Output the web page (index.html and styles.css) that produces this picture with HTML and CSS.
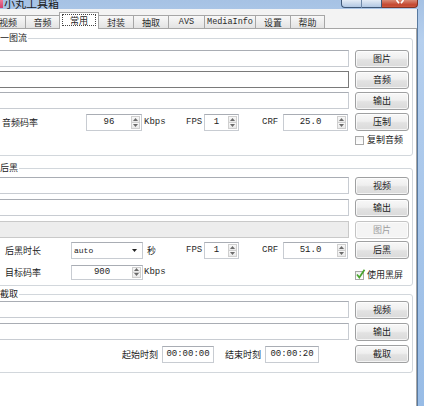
FILE: index.html
```html
<!DOCTYPE html>
<html lang="zh-CN">
<head>
<meta charset="utf-8">
<title>小丸工具箱</title>
<link rel="stylesheet" href="styles.css">
</head>
<body>
<div class="window">
  <div class="titlebar">
    <span class="app-icon"></span>
    <span class="title">小丸工具箱</span>
    <div class="caption">
      <span class="cap-btn cap-min"></span>
      <span class="cap-btn cap-max"></span>
      <span class="cap-btn cap-close"><svg class="cap-x" width="8" height="4" viewBox="0 0 8 4"><path d="M0.5 0 L3 3.2 M7.5 0 L5 3.2" stroke="#fff" stroke-width="1.6" fill="none"/></svg></span>
    </div>
  </div>
  <div class="client">
    <div class="tabs">
      <div class="tab w36">视频</div>
      <div class="tab w35">音频</div>
      <div class="tab w40 active"><span class="focus">常用</span></div>
      <div class="tab w36">封装</div>
      <div class="tab w36">抽取</div>
      <div class="tab w37 latin">AVS</div>
      <div class="tab w52 latin">MediaInfo</div>
      <div class="tab w36">设置</div>
      <div class="tab w35">帮助</div>
    </div>
    <div class="tabpage">
      <fieldset class="group g1">
        <legend>一图流</legend>
        <div class="group-body">
          <div class="row"><div class="tb"></div><button class="btn">图片</button></div>
          <div class="row"><div class="tb focused"></div><button class="btn">音频</button></div>
          <div class="row"><div class="tb"></div><button class="btn">输出</button></div>
          <div class="params p1">
            <span class="lbl lbl-a">音频码率</span>
            <div class="spin"><span class="val">96</span><span class="updown"><span><svg width="5" height="3" viewBox="0 0 5 3"><path d="M0 3 L2.5 0 L5 3Z" fill="#6b6b6b"/></svg></span><span><svg width="5" height="3" viewBox="0 0 5 3"><path d="M0 0 L2.5 3 L5 0Z" fill="#6b6b6b"/></svg></span></span></div>
            <span class="unit u-kbps">Kbps</span>
            <span class="unit">FPS</span>
            <div class="spin"><span class="val">1</span><span class="updown"><span><svg width="5" height="3" viewBox="0 0 5 3"><path d="M0 3 L2.5 0 L5 3Z" fill="#6b6b6b"/></svg></span><span><svg width="5" height="3" viewBox="0 0 5 3"><path d="M0 0 L2.5 3 L5 0Z" fill="#6b6b6b"/></svg></span></span></div>
            <span class="unit u-crf">CRF</span>
            <div class="spin"><span class="val">25.0</span><span class="updown"><span><svg width="5" height="3" viewBox="0 0 5 3"><path d="M0 3 L2.5 0 L5 3Z" fill="#6b6b6b"/></svg></span><span><svg width="5" height="3" viewBox="0 0 5 3"><path d="M0 0 L2.5 3 L5 0Z" fill="#6b6b6b"/></svg></span></span></div>
            <span></span>
            <button class="btn">压制</button>
          </div>
          <div class="checkrow">
            <label class="check"><span class="box"></span>复制音频</label>
          </div>
        </div>
      </fieldset>

      <fieldset class="group g2">
        <legend>后黑</legend>
        <div class="group-body">
          <div class="row"><div class="tb"></div><button class="btn">视频</button></div>
          <div class="row"><div class="tb"></div><button class="btn">输出</button></div>
          <div class="row"><div class="tb disabled"></div><button class="btn" disabled>图片</button></div>
          <div class="params p2">
            <span class="lbl lbl-b">后黑时长</span>
            <div class="combo"><span class="combo-text">auto</span><svg class="combo-arrow" width="5" height="3" viewBox="0 0 5 3"><path d="M0 0 L2.5 3 L5 0Z" fill="#222"/></svg></div>
            <span class="unit u-sec">秒</span>
            <span class="unit">FPS</span>
            <div class="spin"><span class="val">1</span><span class="updown"><span><svg width="5" height="3" viewBox="0 0 5 3"><path d="M0 3 L2.5 0 L5 3Z" fill="#6b6b6b"/></svg></span><span><svg width="5" height="3" viewBox="0 0 5 3"><path d="M0 0 L2.5 3 L5 0Z" fill="#6b6b6b"/></svg></span></span></div>
            <span class="unit u-crf">CRF</span>
            <div class="spin"><span class="val">51.0</span><span class="updown"><span><svg width="5" height="3" viewBox="0 0 5 3"><path d="M0 3 L2.5 0 L5 3Z" fill="#6b6b6b"/></svg></span><span><svg width="5" height="3" viewBox="0 0 5 3"><path d="M0 0 L2.5 3 L5 0Z" fill="#6b6b6b"/></svg></span></span></div>
            <span></span>
            <button class="btn">后黑</button>

            <span class="lbl lbl-b">目标码率</span>
            <div class="spin spin-short"><span class="val">900</span><span class="updown"><span><svg width="5" height="3" viewBox="0 0 5 3"><path d="M0 3 L2.5 0 L5 3Z" fill="#6b6b6b"/></svg></span><span><svg width="5" height="3" viewBox="0 0 5 3"><path d="M0 0 L2.5 3 L5 0Z" fill="#6b6b6b"/></svg></span></span></div>
            <span class="unit u-kbps2">Kbps</span>
            <label class="check check-end"><span class="box"><svg width="11" height="11" viewBox="0 0 11 11"><path d="M2 5.5 L4.3 8.5 L9.5 0.8" stroke="#49a52e" stroke-width="1.7" fill="none"/></svg></span>使用黑屏</label>
          </div>
        </div>
      </fieldset>

      <fieldset class="group g3">
        <legend>截取</legend>
        <div class="group-body">
          <div class="row"><div class="tb"></div><button class="btn">视频</button></div>
          <div class="row"><div class="tb"></div><button class="btn">输出</button></div>
          <div class="times">
            <span class="lbl lbl-r">起始时刻</span>
            <div class="tb time">00:00:00</div>
            <span class="lbl lbl-r">结束时刻</span>
            <div class="tb time">00:00:20</div>
            <span></span>
            <button class="btn">截取</button>
          </div>
        </div>
      </fieldset>
    </div>
  </div>
</div>
</body>
</html>
```

FILE: styles.css
```css
* { box-sizing: border-box; }

html, body {
  margin: 0;
  padding: 0;
}

body {
  width: 424px;
  height: 406px;
  overflow: hidden;
  background: #fff;
  font-family: "Noto Sans CJK SC", "Noto Sans", sans-serif;
  font-size: 9px;
  color: #1c1c1c;
}

.window {
  width: 424px;
  height: 406px;
  display: flex;
  flex-direction: column;
  overflow: hidden;
  background: linear-gradient(to bottom, #a6c2e4 0px, #b5cfee 40px, #98bce6 100%);
}

/* ---------- title bar ---------- */
.titlebar {
  height: 9px;
  flex: none;
  display: flex;
  align-items: flex-start;
  padding-right: 6px;
  overflow: hidden;
}

.app-icon {
  width: 3px;
  height: 8px;
  background: linear-gradient(#f07a98, #cf3f6a);
}

.title {
  font-size: 11px;
  line-height: 12px;
  margin-top: -3px;
  margin-left: 1px;
  color: #1a1a1a;
}

.caption {
  margin-left: auto;
  display: flex;
}

.cap-btn {
  height: 8px;
  border: 1px solid #3f5878;
  border-top: none;
  display: flex;
  justify-content: center;
  align-items: flex-start;
}

.cap-min {
  width: 21px;
  border-bottom-left-radius: 4px;
  border-right-color: #6f88a8;
  background: linear-gradient(#e4ecf6, #c6d6ea 60%, #b2c8e3);
}

.cap-max {
  width: 20px;
  border-left: none;
  background: linear-gradient(#e4ecf6, #c6d6ea 60%, #b2c8e3);
}

.cap-close {
  width: 36px;
  border-color: #7e3326;
  border-left: none;
  border-bottom-right-radius: 4px;
  background: linear-gradient(#d98a76, #c4462f 70%, #cf5a40);
}

.cap-x { display: block; }

/* ---------- client area ---------- */
.client {
  flex: 1;
  min-height: 0;
  margin-right: 7px;
  background: #f3f3f3;
  box-shadow: 1px 0 0 #58799f;
  display: flex;
  flex-direction: column;
}

.tabs {
  height: 19px;
  flex: none;
  display: flex;
  align-items: flex-end;
  margin-left: -10px;
}

.tab {
  height: 13px;
  margin-right: -1px;
  border: 1px solid #a6a6a6;
  border-bottom: none;
  background: linear-gradient(#f8f8f8, #e3e3e3);
  display: flex;
  align-items: center;
  justify-content: center;
  font-size: 9px;
  line-height: 11px;
  color: #2a2a2a;
}

.tab.latin {
  font-family: "Liberation Mono", monospace;
  font-size: 8.5px;
}

.w35 { width: 35px; }
.w36 { width: 36px; }
.w37 { width: 37px; }
.w40 { width: 40px; }
.w52 { width: 52px; }

.tab.active {
  height: 17px;
  margin-bottom: -1px;
  position: relative;
  z-index: 1;
  background: #fff;
  padding: 1px 2px 3px 2px;
  align-items: stretch;
}

.focus {
  flex: 1;
  border: 1px dotted #444;
  display: flex;
  align-items: center;
  justify-content: center;
}

.tabpage {
  flex: 1;
  min-height: 0;
  margin-left: -14px;
  background: #fff;
  border: 1px solid #a6a6a6;
  border-bottom: none;
  padding: 3px 3px 0 3px;
}

/* ---------- group boxes ---------- */
.group {
  margin: 0;
  min-width: 0;
  border: 1px solid #d2d7dc;
  border-radius: 3px;
  padding: 6px 3px 10px 5px;
}

.group legend {
  margin-left: 3px;
  padding: 0 1px;
  font-size: 9px;
  line-height: 12px;
  color: #1c1c1c;
}

.group-body {
  display: flex;
  flex-direction: column;
  gap: 4px;
}

.g2 { margin-top: 6px; padding: 3px 3px 5px 5px; }
.g2 .group-body { gap: 5px; }
.g2 .params { margin-top: -2px; }

.g3 { margin-top: 2px; padding: 1px 3px 10px 5px; }
.g3 .group-body { gap: 5px; }

.row {
  height: 17px;
  display: flex;
  gap: 6px;
}

.tb {
  flex: 1;
  height: 17px;
  background: #fff;
  border: 1px solid #c8ccd2;
  border-top-color: #a9adb4;
}

.tb.focused {
  border-color: #7a7a7a;
}

.tb.disabled {
  background: #ededed;
  border-color: #c9c9c9;
}

.btn {
  width: 54px;
  height: 18px;
  flex: none;
  padding: 0;
  margin: 0;
  border: 1px solid #9fa0a1;
  border-radius: 3px;
  background: linear-gradient(#f8f8f8 0%, #efefef 45%, #e2e2e2 55%, #dadada 100%);
  box-shadow: inset 0 0 0 1px rgba(255, 255, 255, 0.7);
  font-family: "Noto Sans CJK SC", sans-serif;
  font-size: 9px;
  line-height: 14px;
  color: #1c1c1c;
}

.btn:disabled {
  border-color: #c4c4c4;
  background: #f4f4f4;
  color: #9c9c9c;
}

/* ---------- parameter rows ---------- */
.params {
  display: grid;
  align-items: center;
  row-gap: 5px;
}

.p1 {
  grid-template-columns: 90px 56px 44px 18px 35px 44px 65px 7px 54px;
  grid-auto-rows: 18px;
}

.p2 {
  grid-template-columns: 75px 72px 43px 18px 35px 44px 65px 7px 54px;
  grid-template-rows: 18px 16px;
}

.lbl {
  white-space: nowrap;
  font-size: 9px;
}

.lbl-a { padding-left: 6px; }
.lbl-b { padding-left: 9px; }
.lbl-r { text-align: right; padding-right: 4px; }

.unit {
  font-family: "Liberation Mono", monospace;
  font-size: 9px;
  white-space: nowrap;
  color: #2a2a2a;
}

.u-kbps { padding-left: 2px; }
.u-crf { padding-left: 23px; }
.u-sec { padding-left: 4px; font-family: "Noto Sans CJK SC", sans-serif; }
.u-kbps2 { padding-left: 1px; grid-column: 3 / 9; }

.spin {
  height: 17px;
  display: flex;
  background: #fff;
  border: 1px solid #c8ccd2;
  border-top-color: #a9adb4;
}

.spin-short { height: 15px; }

.spin .val {
  flex: 1;
  display: flex;
  align-items: center;
  justify-content: center;
  font-family: "Liberation Mono", monospace;
  font-size: 9px;
}

.updown {
  width: 10px;
  display: flex;
  flex-direction: column;
  padding: 1px 1px 1px 0;
}

.updown span {
  flex: 1;
  display: flex;
  align-items: center;
  justify-content: center;
  border: 1px solid #cfcfcf;
  background: linear-gradient(#f8f8f8, #e9e9e9);
}

.updown span + span { border-top: none; }

.updown svg { display: block; }

.combo {
  height: 17px;
  display: flex;
  align-items: center;
  background: #fff;
  border: 1px solid #c8ccd2;
  border-top-color: #a9adb4;
  padding-left: 2px;
}

.combo-text {
  font-family: "Liberation Mono", monospace;
  font-size: 8px;
}

.combo-arrow {
  margin-left: auto;
  margin-right: 5px;
  display: block;
}

/* ---------- checkboxes ---------- */
.checkrow {
  height: 10px;
  display: flex;
  justify-content: flex-end;
}

.check {
  width: 54px;
  display: flex;
  align-items: center;
  gap: 3px;
  font-size: 9px;
  line-height: 10px;
  white-space: nowrap;
}

.check-end {
  align-self: end;
  height: 10px;
}

.box {
  width: 9px;
  height: 9px;
  flex: none;
  border: 1px solid #a8a8a8;
  background: linear-gradient(#f1f1f1, #ffffff);
  display: flex;
  align-items: center;
  justify-content: center;
  overflow: visible;
}

.box svg {
  display: block;
  margin-top: -2px;
  margin-left: 1px;
  flex: none;
}

/* ---------- time row ---------- */
.times {
  display: grid;
  grid-template-columns: 166px 52px 51px 54px 36px 54px;
  align-items: center;
  height: 17px;
}

.tb.time {
  height: 17px;
  display: flex;
  align-items: center;
  justify-content: center;
  font-family: "Liberation Mono", monospace;
  font-size: 9px;
}
```
